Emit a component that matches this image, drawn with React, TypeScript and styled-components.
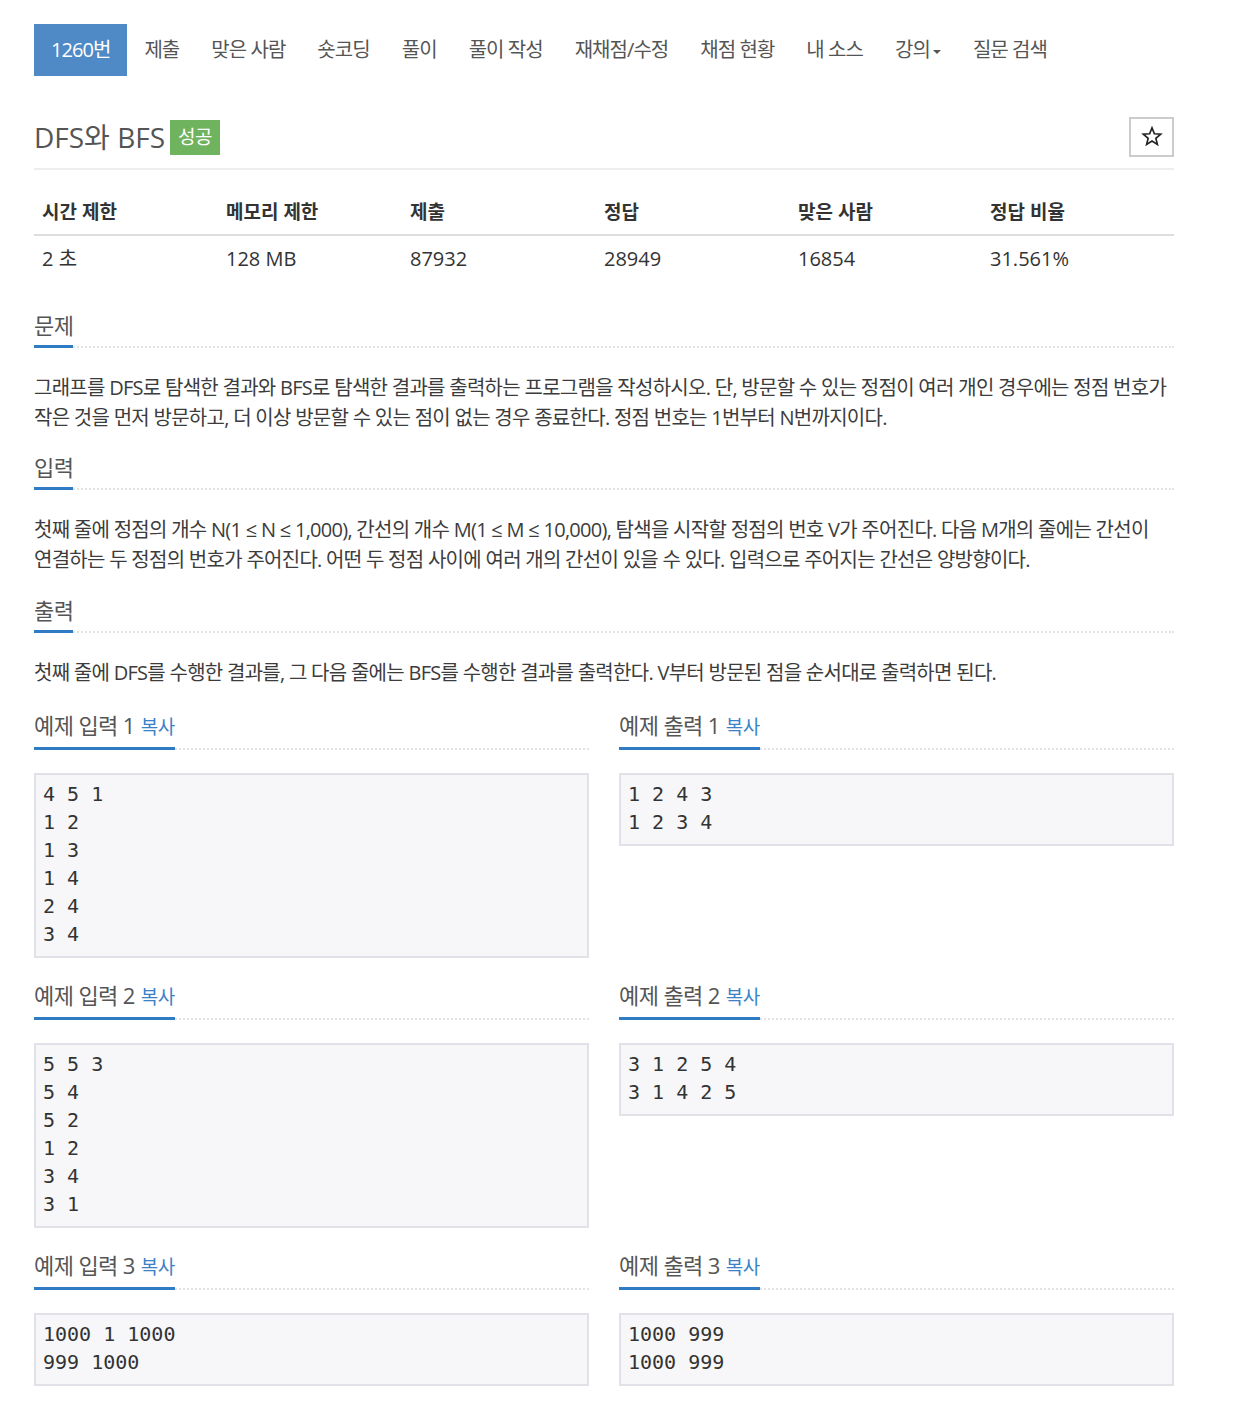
import React from 'react';
import styled, { createGlobalStyle } from 'styled-components';

const GlobalStyle = createGlobalStyle`
  html, body { margin: 0; padding: 0; background: #fff; }
  body {
    font-family: "Open Sans", "Noto Sans CJK KR", sans-serif;
    color: #333;
  }
  * { box-sizing: border-box; }
`;

const Page = styled.div`
  width: 1140px;
  margin-left: 34px;
  padding: 24px 0 20px;
`;

const Nav = styled.ul`
  display: flex;
  gap: 2px;
  list-style: none;
  margin: 0;
  padding: 0;
`;

const NavItem = styled.li<{ $active?: boolean }>`
  display: flex;
  align-items: center;
  padding: 13px ${(p) => (p.$active ? '17px' : '15px')};
  font-size: 20px;
  line-height: 26px;
  letter-spacing: -0.95px;
  color: ${(p) => (p.$active ? '#fff' : '#555')};
  background: ${(p) => (p.$active ? '#4f8ac6' : 'transparent')};
`;

const Caret = styled.span`
  display: inline-block;
  margin-left: 3px;
  margin-top: 3px;
  border-top: 4px solid #555;
  border-left: 4px solid transparent;
  border-right: 4px solid transparent;
`;

const TitleRow = styled.div`
  display: flex;
  justify-content: space-between;
  align-items: center;
  margin-top: 41px;
  padding-bottom: 11px;
  border-bottom: 2px solid #eee;
`;

const Title = styled.h1`
  display: flex;
  align-items: center;
  gap: 5px;
  margin: 0;
  font-size: 28px;
  font-weight: 400;
  line-height: 38px;
  color: #555;
`;

const Badge = styled.span`
  display: inline-block;
  height: 35px;
  padding: 0 8px;
  background: #70b35f;
  color: #fff;
  font-size: 19px;
  line-height: 35px;
  letter-spacing: -0.5px;
`;

const StarButton = styled.button`
  width: 45px;
  height: 40px;
  border: 2px solid #ccc;
  background: #fff;
  padding: 0 0 1px;
  display: flex;
  align-items: center;
  justify-content: center;
`;

const Stats = styled.div`
  display: grid;
  grid-template-columns: 184px 184px 194px 194px 192px 1fr;
  margin-top: 21px;
`;

const HeadCell = styled.div`
  padding: 8px 8px 9px;
  font-size: 19px;
  font-weight: 700;
  line-height: 26px;
  color: #333;
  border-bottom: 2px solid #ddd;
`;

const BodyCell = styled.div`
  padding: 9px 8px;
  font-size: 20px;
  line-height: 28px;
  color: #333;
`;

const Section = styled.section<{ $gap: number }>`
  margin-top: ${(p) => p.$gap}px;
`;

const SectionHeader = styled.h2`
  display: flex;
  margin: 0 0 25px;
  border-bottom: 2px dotted #e3e3e3;
  font-weight: 400;
`;

const HeaderLabel = styled.span`
  display: inline-flex;
  align-items: baseline;
  gap: 6px;
  padding-bottom: 5px;
  margin-bottom: -2px;
  border-bottom: 3px solid #2f7bc4;
  font-size: 22px;
  line-height: 30px;
  letter-spacing: -0.6px;
  color: #555;
`;

const CopyLink = styled.a`
  font-size: 19px;
  color: #3b81c7;
  text-decoration: none;
`;

const Text = styled.p`
  margin: 0;
  font-size: 20px;
  line-height: 30px;
  letter-spacing: -0.72px;
  word-break: keep-all;
  color: #3c3c3c;
`;

const SampleGrid = styled.div`
  display: grid;
  grid-template-columns: 1fr 1fr;
  column-gap: 30px;
  row-gap: 22px;
  align-items: start;
  margin-top: 22px;
`;

const SampleBlock = styled.div`
  display: flex;
  flex-direction: column;
`;

const SampleHeader = styled(SectionHeader)`
  margin-bottom: 23px;
`;

const Pre = styled.pre`
  margin: 0;
  padding: 5px 7px 8px;
  border: 2px solid #e1e1e8;
  background: #f7f7f9;
  font-family: "DejaVu Sans Mono", monospace;
  font-size: 20px;
  line-height: 28px;
  color: #333;
  white-space: pre;
`;

const StarIcon = () => (
  <svg width="22" height="22" viewBox="0 0 24 24" aria-hidden="true">
    <polygon
      points="12,2 14.59,8.44 21.51,8.91 16.18,13.36 17.88,20.09 12,16.4 6.12,20.09 7.82,13.36 2.49,8.91 9.41,8.44"
      fill="none"
      stroke="#222"
      strokeWidth="1.8"
      strokeLinejoin="miter"
    />
  </svg>
);

const navItems = ['제출', '맞은 사람', '숏코딩', '풀이', '풀이 작성', '재채점/수정', '채점 현황', '내 소스'];

const stats = [
  ['시간 제한', '2 초'],
  ['메모리 제한', '128 MB'],
  ['제출', '87932'],
  ['정답', '28949'],
  ['맞은 사람', '16854'],
  ['정답 비율', '31.561%'],
];

const samples: { label: string; data: string }[] = [
  { label: '예제 입력 1', data: '4 5 1\n1 2\n1 3\n1 4\n2 4\n3 4' },
  { label: '예제 출력 1', data: '1 2 4 3\n1 2 3 4' },
  { label: '예제 입력 2', data: '5 5 3\n5 4\n5 2\n1 2\n3 4\n3 1' },
  { label: '예제 출력 2', data: '3 1 2 5 4\n3 1 4 2 5' },
  { label: '예제 입력 3', data: '1000 1 1000\n999 1000' },
  { label: '예제 출력 3', data: '1000 999\n1000 999' },
];

export default function App() {
  return (
    <>
      <GlobalStyle />
      <Page>
        <Nav>
          <NavItem $active>1260번</NavItem>
          {navItems.map((n) => (
            <NavItem key={n}>{n}</NavItem>
          ))}
          <NavItem>
            강의
            <Caret />
          </NavItem>
          <NavItem>질문 검색</NavItem>
        </Nav>

        <TitleRow>
          <Title>
            DFS와 BFS <Badge>성공</Badge>
          </Title>
          <StarButton aria-label="즐겨찾기">
            <StarIcon />
          </StarButton>
        </TitleRow>

        <Stats>
          {stats.map(([h]) => (
            <HeadCell key={h}>{h}</HeadCell>
          ))}
          {stats.map(([h, v]) => (
            <BodyCell key={h}>{v}</BodyCell>
          ))}
        </Stats>

        <Section $gap={28}>
          <SectionHeader>
            <HeaderLabel>문제</HeaderLabel>
          </SectionHeader>
          <Text>
            그래프를 DFS로 탐색한 결과와 BFS로 탐색한 결과를 출력하는 프로그램을 작성하시오. 단, 방문할 수 있는 정점이 여러 개인 경우에는 정점 번호가 작은 것을 먼저 방문하고, 더 이상 방문할 수 있는 점이 없는 경우 종료한다. 정점 번호는 1번부터 N번까지이다.
          </Text>
        </Section>

        <Section $gap={19}>
          <SectionHeader>
            <HeaderLabel>입력</HeaderLabel>
          </SectionHeader>
          <Text>
            첫째 줄에 정점의 개수 N(1 ≤ N ≤ 1,000), 간선의 개수 M(1 ≤ M ≤ 10,000), 탐색을 시작할 정점의 번호 V가 주어진다. 다음 M개의 줄에는 간선이 연결하는 두 정점의 번호가 주어진다. 어떤 두 정점 사이에 여러 개의 간선이 있을 수 있다. 입력으로 주어지는 간선은 양방향이다.
          </Text>
        </Section>

        <Section $gap={20}>
          <SectionHeader>
            <HeaderLabel>출력</HeaderLabel>
          </SectionHeader>
          <Text>
            첫째 줄에 DFS를 수행한 결과를, 그 다음 줄에는 BFS를 수행한 결과를 출력한다. V부터 방문된 점을 순서대로 출력하면 된다.
          </Text>
        </Section>

        <SampleGrid>
          {samples.map((s) => (
            <SampleBlock key={s.label}>
              <SampleHeader>
                <HeaderLabel>
                  {s.label}
                  <CopyLink href="#">복사</CopyLink>
                </HeaderLabel>
              </SampleHeader>
              <Pre>{s.data}</Pre>
            </SampleBlock>
          ))}
        </SampleGrid>
      </Page>
    </>
  );
}
